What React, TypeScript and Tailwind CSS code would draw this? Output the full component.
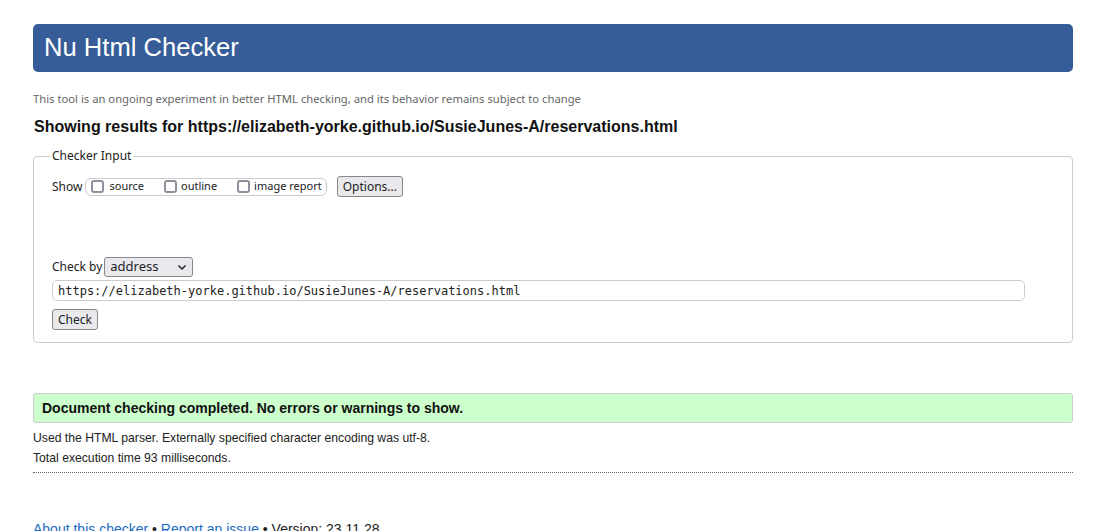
export default function App() {
  const ui = { fontFamily: '"Noto Sans", "Open Sans", sans-serif' };
  return (
    <div className="min-h-[531px] bg-white text-[#222] overflow-hidden" style={{ fontFamily: '"Liberation Sans", Arial, sans-serif' }}>
      <div className="mx-[33px] pt-[24px]">
        <div className="bg-[#365d98] rounded-[5px] h-[48px] flex items-center px-[11px]">
          <h1 className="text-white text-[25.6px] leading-none">Nu Html Checker</h1>
        </div>
        <p className="text-[11.25px] text-[#666] mt-[20px] leading-[14px]" style={ui}>
          This tool is an ongoing experiment in better HTML checking, and its behavior remains subject to change
        </p>
        <h2 className="font-bold text-[16px] text-[#111] mt-[12px] ml-[1px] leading-[18px]">
          Showing results for https://elizabeth-yorke.github.io/SusieJunes-A/reservations.html
        </h2>
        <fieldset className="mt-[11px] border border-[#ccc] rounded-[4px] px-[18px] pb-[12px]" style={ui}>
          <legend className="text-[12px] px-[2px] -ml-[2px]">Checker Input</legend>
          <div className="flex items-center mt-[11px] text-[12px]">
            <span className="mr-[3px]">Show</span>
            <div className="flex items-center border border-[#ccc] rounded-[6px] h-[18px] pl-[5px] pr-[4px] text-[11px]">
              <label className="flex items-center mr-[20px]">
                <span className="w-[13px] h-[13px] border-2 border-[#8f8f9d] rounded-[3px] mr-[5px] bg-white" />
                source
              </label>
              <label className="flex items-center mr-[20px]">
                <span className="w-[13px] h-[13px] border-2 border-[#8f8f9d] rounded-[3px] mr-[4px] bg-white" />
                outline
              </label>
              <label className="flex items-center">
                <span className="w-[13px] h-[13px] border-2 border-[#8f8f9d] rounded-[3px] mr-[4px] bg-white" />
                image report
              </label>
            </div>
            <button className="ml-[10px] h-[21px] px-[5px] border border-[#888] rounded-[3px] bg-[#e9e9ed] text-[12px] leading-none">
              Options...
            </button>
          </div>
          <div className="flex items-center mt-[60px] text-[12px]">
            <span className="mr-[2px]">Check by</span>
            <div className="flex items-center justify-between w-[89px] h-[20px] border border-[#888] rounded-[3px] bg-[#e9e9ed] px-[5px] text-[13px]">
              <span>address</span>
              <svg width="10" height="7" viewBox="0 0 10 7"><path d="M1.5 1.5 L5 5 L8.5 1.5" fill="none" stroke="#222" strokeWidth="1.5" /></svg>
            </div>
          </div>
          <div className="mt-[3px] w-[973px] h-[21px] border border-[#ccc] rounded-[5px] flex items-center px-[5px] text-[12px]" style={{ fontFamily: '"DejaVu Sans Mono", monospace' }}>
            https://elizabeth-yorke.github.io/SusieJunes-A/reservations.html
          </div>
          <button className="mt-[8px] h-[21px] px-[5px] border border-[#888] rounded-[3px] bg-[#e9e9ed] text-[12px] leading-none">
            Check
          </button>
        </fieldset>
        <div className="mt-[50px] h-[30px] bg-[#ccffcc] border border-[#ccc] rounded-[3px] flex items-center px-[8px]">
          <span className="font-bold text-[14px] text-[#111]">Document checking completed. No errors or warnings to show.</span>
        </div>
        <p className="text-[12.2px] mt-[8px] leading-[14px]">Used the HTML parser. Externally specified character encoding was utf-8.</p>
        <p className="text-[12.2px] mt-[6px] leading-[14px]">Total execution time 93 milliseconds.</p>
        <div className="mt-[7px] border-t border-dotted border-[#666]" />
        <p className="text-[14px] mt-[48px] leading-[16px]">
          <a className="text-[#1a6ac0]">About this checker</a> • <a className="text-[#1a6ac0]">Report an issue</a> • Version: 23.11.28
        </p>
      </div>
    </div>
  );
}
